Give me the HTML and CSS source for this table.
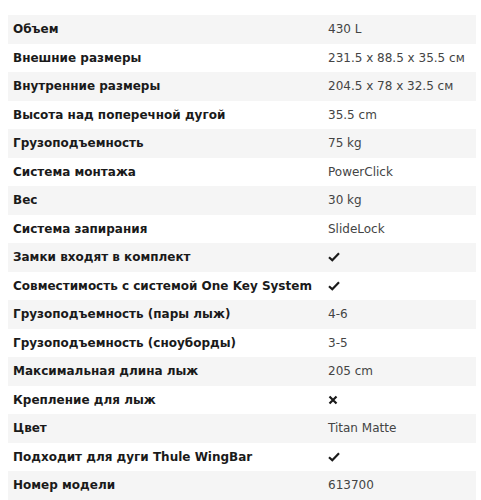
FILE: index.html
```html
<!DOCTYPE html>
<html lang="ru">
<head>
<meta charset="utf-8">
<link rel="stylesheet" href="styles.css">
</head>
<body>
<table class="specs">
<colgroup><col class="c1"><col class="c2"></colgroup>
<tbody>
<tr><th>Объем</th><td>430 L</td></tr>
<tr><th>Внешние размеры</th><td>231.5 x 88.5 x 35.5 см</td></tr>
<tr><th>Внутренние размеры</th><td>204.5 x 78 x 32.5 см</td></tr>
<tr><th>Высота над поперечной дугой</th><td>35.5 cm</td></tr>
<tr><th>Грузоподъемность</th><td>75 kg</td></tr>
<tr><th>Система монтажа</th><td>PowerClick</td></tr>
<tr><th>Вес</th><td>30 kg</td></tr>
<tr><th>Система запирания</th><td>SlideLock</td></tr>
<tr><th>Замки входят в комплект</th><td><svg class="ic" width="12" height="10" viewBox="0 0 12 10"><path d="M1 5.2 L4.3 8.2 L11 1.3" fill="none" stroke="#1a1a1a" stroke-width="2.2"/></svg></td></tr>
<tr><th>Совместимость с системой One Key System</th><td><svg class="ic" width="12" height="10" viewBox="0 0 12 10"><path d="M1 5.2 L4.3 8.2 L11 1.3" fill="none" stroke="#1a1a1a" stroke-width="2.2"/></svg></td></tr>
<tr><th>Грузоподъемность (пары лыж)</th><td>4-6</td></tr>
<tr><th>Грузоподъемность (сноуборды)</th><td>3-5</td></tr>
<tr><th>Максимальная длина лыж</th><td>205 cm</td></tr>
<tr><th>Крепление для лыж</th><td><svg class="ic" width="10" height="10" viewBox="0 0 10 10"><path d="M1.5 1.5 L8.5 8.5 M8.5 1.5 L1.5 8.5" fill="none" stroke="#1a1a1a" stroke-width="2.2"/></svg></td></tr>
<tr><th>Цвет</th><td>Titan Matte</td></tr>
<tr><th>Подходит для дуги Thule WingBar</th><td><svg class="ic" width="12" height="10" viewBox="0 0 12 10"><path d="M1 5.2 L4.3 8.2 L11 1.3" fill="none" stroke="#1a1a1a" stroke-width="2.2"/></svg></td></tr>
<tr><th>Номер модели</th><td>613700</td></tr>
</tbody>
</table>
</body>
</html>
```
FILE: styles.css
```css
html, body {
  margin: 0;
  background: #fff;
}
body {
  padding: 15px 5px 0 8px;
  font-family: "DejaVu Sans", Verdana, sans-serif;
  font-size: 12px;
}
.specs {
  width: 468px;
  border-collapse: collapse;
  table-layout: fixed;
}
.c1 { width: 315px; }
.specs tr {
  height: 28.5px;
}
.specs tr:nth-child(odd) {
  background: #f5f5f5;
}
.specs th,
.specs td {
  padding: 0 5px;
  text-align: left;
  vertical-align: middle;
  line-height: 16px;
  white-space: nowrap;
}
.specs th {
  font-weight: bold;
  color: #1a1a1a;
}
.specs td {
  color: #444;
}
.ic {
  display: block;
}
```
